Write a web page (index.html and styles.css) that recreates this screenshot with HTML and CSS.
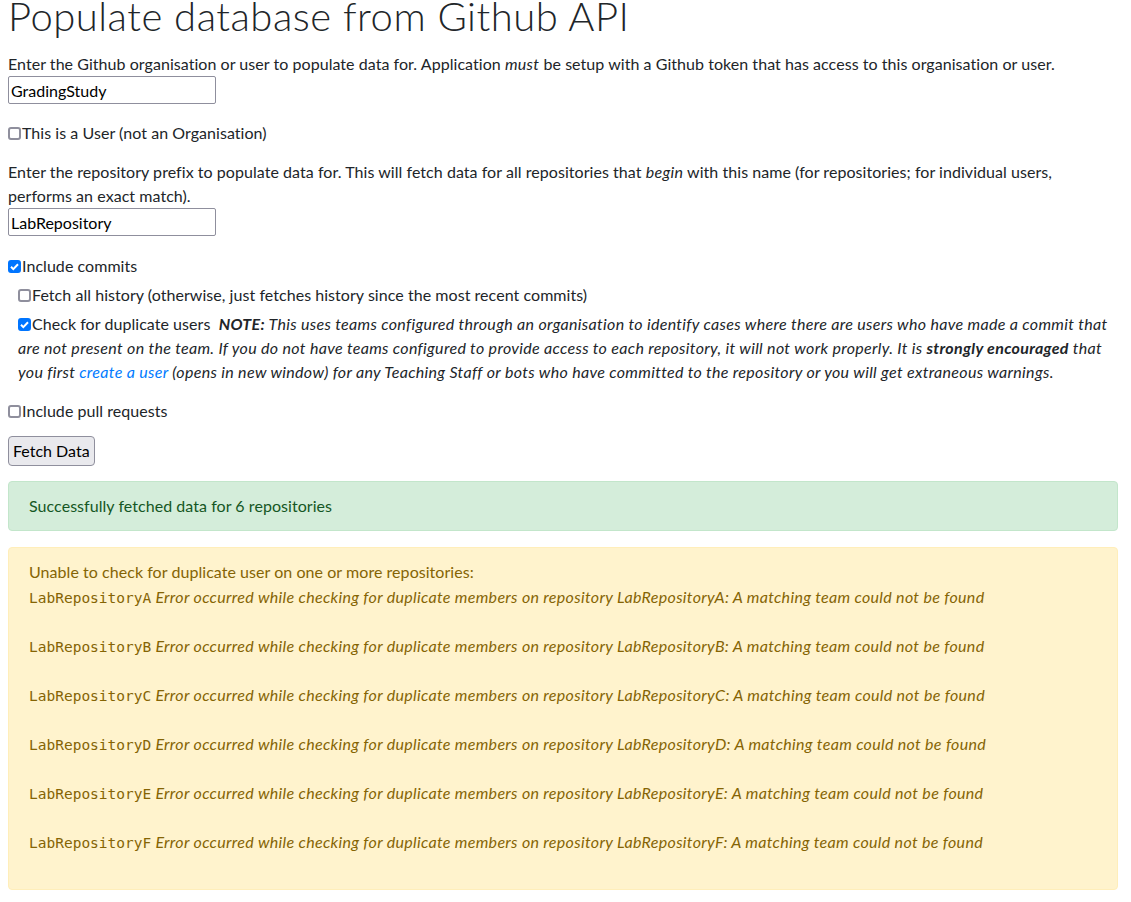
FILE: index.html
```html
<!DOCTYPE html>
<html lang="en">
<head>
<meta charset="utf-8">
<title>Populate database from Github API</title>
<link rel="stylesheet" href="styles.css">
</head>
<body>
<main class="page">
  <h1 class="title">Populate database from Github API</h1>

  <div class="field">
    <label class="field-label" for="org">Enter the Github organisation or user to populate data for. Application <em>must</em> be setup with a Github token that has access to this organisation or user.</label>
    <input class="text-input" id="org" type="text" value="GradingStudy">
  </div>

  <div class="check-row first-check">
    <input class="check" type="checkbox" id="isUser"><label for="isUser">This is a User (not an Organisation)</label>
  </div>

  <div class="field field-repo">
    <label class="field-label" for="prefix">Enter the repository prefix to populate data for. This will fetch data for all repositories that <em>begin</em> with this name (for repositories; for individual users, performs an exact match).</label>
    <input class="text-input" id="prefix" type="text" value="LabRepository">
  </div>

  <div class="check-row commits-row">
    <input class="check" type="checkbox" id="commits" checked><label for="commits">Include commits</label>
  </div>
  <div class="sub-options">
    <div class="check-row sub-row">
      <input class="check" type="checkbox" id="history"><label for="history">Fetch all history (otherwise, just fetches history since the most recent commits)</label>
    </div>
    <div class="check-row sub-row">
      <input class="check" type="checkbox" id="dupes" checked><label for="dupes">Check for duplicate users</label>&nbsp; <em><strong>NOTE:</strong> This uses teams configured through an organisation to identify cases where there are users who have made a commit that are not present on the team. If you do not have teams configured to provide access to each repository, it will not work properly. It is <strong>strongly encouraged</strong> that you first <a class="link" href="#">create a user</a> (opens in new window) for any Teaching Staff or bots who have committed to the repository or you will get extraneous warnings.</em>
    </div>
  </div>

  <div class="check-row pulls-row">
    <input class="check" type="checkbox" id="pulls"><label for="pulls">Include pull requests</label>
  </div>

  <button class="btn" type="button">Fetch Data</button>

  <div class="alert alert-success">Successfully fetched data for 6 repositories</div>

  <div class="alert alert-warning">
    <div class="warn-head">Unable to check for duplicate user on one or more repositories:</div>
    <div class="warn-item"><code class="repo">LabRepositoryA</code> <em>Error occurred while checking for duplicate members on repository LabRepositoryA: A matching team could not be found</em></div>
    <div class="warn-item"><code class="repo">LabRepositoryB</code> <em>Error occurred while checking for duplicate members on repository LabRepositoryB: A matching team could not be found</em></div>
    <div class="warn-item"><code class="repo">LabRepositoryC</code> <em>Error occurred while checking for duplicate members on repository LabRepositoryC: A matching team could not be found</em></div>
    <div class="warn-item"><code class="repo">LabRepositoryD</code> <em>Error occurred while checking for duplicate members on repository LabRepositoryD: A matching team could not be found</em></div>
    <div class="warn-item"><code class="repo">LabRepositoryE</code> <em>Error occurred while checking for duplicate members on repository LabRepositoryE: A matching team could not be found</em></div>
    <div class="warn-item warn-last"><code class="repo">LabRepositoryF</code> <em>Error occurred while checking for duplicate members on repository LabRepositoryF: A matching team could not be found</em></div>
  </div>
</main>
</body>
</html>
```

FILE: styles.css
```css
html, body {
  margin: 0;
  padding: 0;
  background: #fff;
}

body {
  font-family: Lato, "Noto Sans", "Liberation Sans", sans-serif;
  font-size: 16px;
  line-height: 24px;
  letter-spacing: 0.05px;
  color: #212529;
}

em {
  letter-spacing: 0.32px;
}

.page {
  width: 1110px;
  padding: 0 0 0 8px;
}

.title {
  margin: -8px 0 12px;
  font-size: 40px;
  line-height: 48px;
  font-weight: 300;
  letter-spacing: 0.5px;
}

.field {
  margin-bottom: 17px;
}

.field-label {
  display: block;
}

.text-input {
  display: block;
  box-sizing: border-box;
  width: 208px;
  height: 28px;
  margin: 0;
  padding: 1px 2px;
  border: 1px solid #8f8f9d;
  border-radius: 2px;
  font: inherit;
  color: #000;
}

.check-row {
  line-height: 24px;
}

.check {
  appearance: none;
  -webkit-appearance: none;
  box-sizing: border-box;
  width: 13px;
  height: 13px;
  margin: 0 1px 0 0;
  vertical-align: -1px;
  border: 2px solid #8f8f9d;
  border-radius: 3px;
  background: #fff;
}

.check:checked {
  border-color: #0075ff;
  background: #0075ff url("data:image/svg+xml,%3Csvg xmlns='http://www.w3.org/2000/svg' viewBox='0 0 13 13'%3E%3Cpath d='M3 6.8l2.3 2.3L10 4.2' fill='none' stroke='white' stroke-width='2'/%3E%3C/svg%3E") center / 13px 13px no-repeat;
}

.first-check {
  margin-bottom: 15px;
}

.field-repo {
  margin-bottom: 18px;
}

.sub-options {
  padding-left: 10px;
  margin-top: 5px;
}

.sub-row {
  margin-bottom: 5px;
}

.pulls-row {
  margin-top: 15px;
  margin-bottom: 13px;
}

.link {
  color: #007bff;
  text-decoration: none;
}

.btn {
  display: block;
  box-sizing: border-box;
  height: 30px;
  margin: 0 0 15px;
  padding: 0 4px;
  font: inherit;
  color: #000;
  background: #e9e9ed;
  border: 1px solid #8f8f9d;
  border-radius: 4px;
}

.alert {
  box-sizing: border-box;
  padding: 12px 20px;
  border: 1px solid transparent;
  border-radius: 4px;
  margin-bottom: 16px;
}

.alert-success {
  color: #155724;
  background: #d4edda;
  border-color: #c3e6cb;
}

.alert-warning {
  color: #856404;
  background: #fff3cd;
  border-color: #ffeeba;
}

.warn-head {
  margin-bottom: 1px;
}

.warn-item {
  height: 24px;
  margin-bottom: 25px;
}

.warn-last {
  margin-bottom: 23px;
}

.repo {
  font-family: "DejaVu Sans Mono", "Liberation Mono", monospace;
  font-size: 14.5px;
  line-height: 1;
  letter-spacing: 0;
  color: inherit;
}
```
